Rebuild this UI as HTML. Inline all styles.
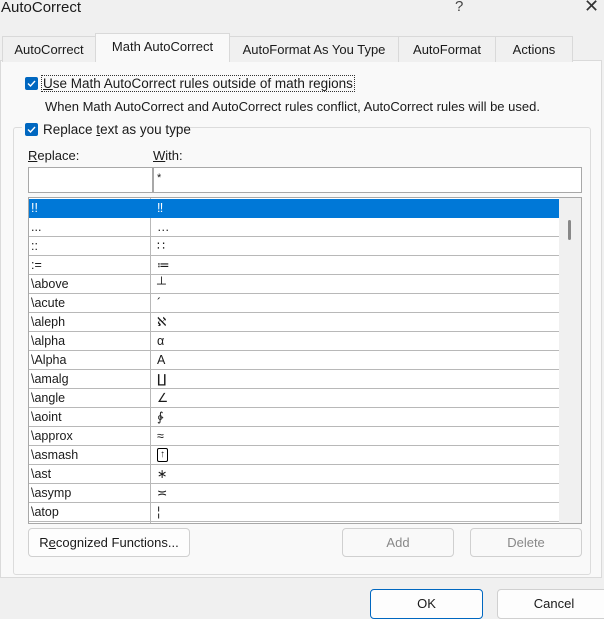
<!DOCTYPE html><html><head><style>
body{margin:0;width:604px;height:619px;background:#f0f0f0;font-family:"Liberation Sans","DejaVu Sans",sans-serif;font-size:13px;color:#1a1a1a;position:relative;overflow:hidden}
.a{position:absolute}
.tab{position:absolute;top:36px;height:25px;line-height:25px;text-align:center;border:1px solid #d9d9d9;border-bottom:none;background:#f0f0f0;font-size:13px}
.cb{position:absolute;width:13px;height:13px;background:#0067c0;border-radius:2px}
.cb svg{position:absolute;left:2px;top:2px}
.row{position:absolute;left:0;width:530px;height:18px;border-bottom:1px solid #b8b8b8;line-height:18px;font-size:12.5px}
.row span{position:absolute;left:2px}
.row b{font-weight:normal;position:absolute;left:128px}
.btn{position:absolute;background:#fdfdfd;border:1px solid #d0d0d0;border-radius:4px;text-align:center;font-size:13px}
</style></head><body>
<div class="a" style="left:1px;top:-1px;font-size:15px">AutoCorrect</div>
<div class="a" style="left:455px;top:-2px;font-size:15px;color:#444">?</div>
<div class="a" style="left:584px;top:-4px;font-size:18px;color:#333">✕</div>
<div class="a" style="left:0;top:60px;width:600px;height:516px;background:#f9f9f9;border:1px solid #dadada"></div>
<div class="tab" style="left:2px;width:92px">AutoCorrect</div>
<div class="tab" style="left:95px;width:133px;top:33px;height:28px;background:#f9f9f9">Math AutoCorrect</div>
<div class="tab" style="left:229px;width:168px">AutoFormat As You Type</div>
<div class="tab" style="left:398px;width:96px">AutoFormat</div>
<div class="tab" style="left:495px;width:76px">Actions</div>
<div class="cb" style="left:25px;top:77px"><svg width="9" height="9"><path d="M1 4.5L3.5 7L8 2" stroke="#fff" stroke-width="1.4" fill="none"/></svg></div>
<div class="a" style="left:41px;top:75px;border:1px dotted #333;padding:0 1px;font-size:13.5px"><u>U</u>se Math AutoCorrect rules outside of math regions</div>
<div class="a" style="left:45px;top:99px;font-size:13px">When Math AutoCorrect and AutoCorrect rules conflict, AutoCorrect rules will be used.</div>
<div class="a" style="left:13px;top:127px;width:576px;height:446px;border:1px solid #dcdcdc;border-radius:3px"></div>
<div class="a" style="left:22px;top:120px;width:150px;height:18px;background:#f9f9f9"></div>
<div class="cb" style="left:25px;top:123px"><svg width="9" height="9"><path d="M1 4.5L3.5 7L8 2" stroke="#fff" stroke-width="1.4" fill="none"/></svg></div>
<div class="a" style="left:43px;top:122px;font-size:13.5px">Replace <u>t</u>ext as you type</div>
<div class="a" style="left:28px;top:148px"><u>R</u>eplace:</div>
<div class="a" style="left:153px;top:148px"><u>W</u>ith:</div>
<div class="a" style="left:28px;top:167px;width:123px;height:24px;background:#fff;border:1px solid #a8a8a8"></div>
<div class="a" style="left:153px;top:167px;width:427px;height:24px;background:#fff;border:1px solid #a8a8a8"><span style="position:absolute;left:3px;top:4px;font-size:11px">*</span></div>
<div class="a" style="left:28px;top:197px;width:552px;height:325px;background:#fff;border:1px solid #a8a8a8;overflow:hidden">
<div class="a" style="left:530px;top:0;width:22px;height:325px;background:#f0f0f0"></div>
<div class="a" style="left:539px;top:22px;width:3px;height:20px;background:#888;border-radius:2px"></div>
<div class="a" style="left:121px;top:0;width:1px;height:325px;background:#b8b8b8"></div>
<div class="row" style="top:1px;background:#0078d7;color:#fff;border-bottom-color:#0078d7"><span>!!</span><b>‼</b></div>
<div class="row" style="top:20px"><span>...</span><b>…</b></div>
<div class="row" style="top:39px"><span>::</span><b>∷</b></div>
<div class="row" style="top:58px"><span>:=</span><b>≔</b></div>
<div class="row" style="top:77px"><span>\above</span><b>┴</b></div>
<div class="row" style="top:96px"><span>\acute</span><b>´</b></div>
<div class="row" style="top:115px"><span>\aleph</span><b>ℵ</b></div>
<div class="row" style="top:134px"><span>\alpha</span><b>α</b></div>
<div class="row" style="top:153px"><span>\Alpha</span><b>Α</b></div>
<div class="row" style="top:172px"><span>\amalg</span><b>∐</b></div>
<div class="row" style="top:191px"><span>\angle</span><b>∠</b></div>
<div class="row" style="top:210px"><span>\aoint</span><b>∳</b></div>
<div class="row" style="top:229px"><span>\approx</span><b>≈</b></div>
<div class="row" style="top:248px"><span>\asmash</span><b style="border:1px solid #000;border-radius:2px;line-height:12px;top:2px;padding:0 2px;font-size:10px">↑</b></div>
<div class="row" style="top:267px"><span>\ast</span><b>∗</b></div>
<div class="row" style="top:286px"><span>\asymp</span><b>≍</b></div>
<div class="row" style="top:305px"><span>\atop</span><b>¦</b></div>
</div>
<div class="btn" style="left:28px;top:528px;width:160px;height:27px;line-height:27px">R<u>e</u>cognized Functions...</div>
<div class="btn" style="left:342px;top:528px;width:110px;height:27px;line-height:27px;color:#888;background:#f9f9f9">Add</div>
<div class="btn" style="left:470px;top:528px;width:110px;height:27px;line-height:27px;color:#888;background:#f9f9f9">Delete</div>
<div class="btn" style="left:370px;top:589px;width:111px;height:28px;line-height:28px;border-color:#0067c0">OK</div>
<div class="btn" style="left:497px;top:589px;width:112px;height:28px;line-height:28px">Cancel</div>
</body></html>
